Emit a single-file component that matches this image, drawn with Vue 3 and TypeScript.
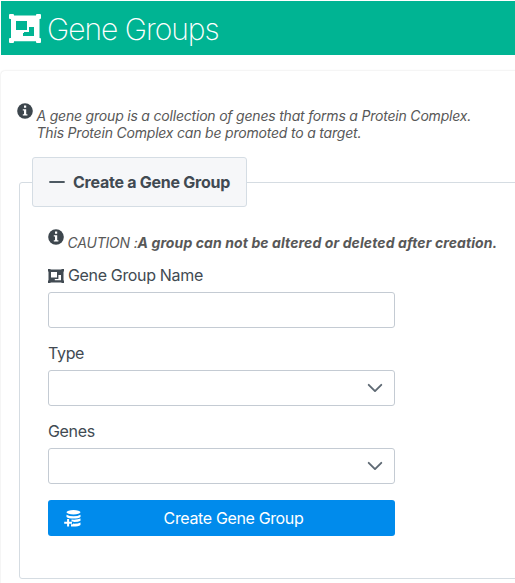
<script setup lang="ts">
import { ref } from 'vue'

interface SelectField {
  id: string
  label: string
}

const groupName = ref('')
const selects: SelectField[] = [
  { id: 'type', label: 'Type' },
  { id: 'genes', label: 'Genes' },
]
</script>

<template>
  <main class="page">
    <header class="banner">
      <svg class="banner-icon" viewBox="0 0 32 29" aria-hidden="true">
        <path fill="currentColor" fill-rule="evenodd" d="M1 0h3q1 0 1 1v.5h22V1q0-1 1-1h3q1 0 1 1v3q0 1-1 1h-.5v19h.5q1 0 1 1v3q0 1-1 1h-3q-1 0-1-1v-.7H5v.7q0 1-1 1H1q-1 0-1-1v-3q0-1 1-1h1V5H1Q0 5 0 4V1Q0 0 1 0zM7 7v9h11V7zM20 13v5h-5v1h-1v3h11v-9z" />
      </svg>
      <h1 class="title">Gene Groups</h1>
    </header>

    <section class="card">
      <div class="note intro">
        <svg class="info" viewBox="0 0 16 16" aria-hidden="true">
          <circle cx="8" cy="8" r="7.8" fill="#3d464d" />
          <path fill="#fff" d="M7 2.5h2.2v2.3H7zM5.8 6.2h3.4v5h1.2v1.4H5.8v-1.4H7V7.6H5.8z" />
        </svg>
        <p class="note-text">A gene group is a collection of genes that forms a Protein Complex.<br />This Protein Complex can be promoted to a target.</p>
      </div>

      <fieldset class="panel">
        <legend class="legend">
          <svg class="minus" viewBox="0 0 16 16" aria-hidden="true"><path d="M1 8h14" /></svg>
          <span class="legend-text">Create a Gene Group</span>
        </legend>

        <div class="note caution">
          <svg class="info" viewBox="0 0 16 16" aria-hidden="true">
            <circle cx="8" cy="8" r="7.8" fill="#3d464d" />
            <path fill="#fff" d="M7 2.5h2.2v2.3H7zM5.8 6.2h3.4v5h1.2v1.4H5.8v-1.4H7V7.6H5.8z" />
          </svg>
          <p class="note-text">CAUTION :<b class="strong">A group can not be altered or deleted after creation.</b></p>
        </div>

        <form class="form" @submit.prevent>
          <div class="field">
            <label class="label" for="name">
              <svg class="label-icon" viewBox="0 0 16 14" aria-hidden="true">
                <path fill="currentColor" fill-rule="evenodd" d="M0 0h2.500v.5h11V0H16v2.500h-.5v9h.5V14h-2.500v-.5h-11v.5H0v-2.500h.5v-9H0zM3 3v5.500h6V3zM10.400 6v3.900H6.800V11.200H13V6z" />
              </svg>
              <span class="name-text">Gene Group Name</span>
            </label>
            <input id="name" v-model="groupName" class="control" type="text" />
          </div>

          <div v-for="field in selects" :key="field.id" class="field">
            <span class="label">{{ field.label }}</span>
            <div class="control select" role="combobox" tabindex="0" :aria-label="field.label">
              <svg class="chevron" viewBox="0 0 16 16" aria-hidden="true"><path d="M1.700 4.800 8 11.100l6.300-6.300" /></svg>
            </div>
          </div>

          <button class="submit" type="submit">
            <svg class="db" viewBox="0 0 17 17" aria-hidden="true">
              <ellipse cx="9.500" cy="2.300" rx="7" ry="2.200" />
              <path d="M2.500 4.700q3 1.500 7 1.500t7-1.500v2.200q-2 1.700-7 1.700-5.100 0-7-1.700z" />
              <path d="M7.500 9.600q6 .4 9-1v2.100q-2 1.300-6.500 1.400l-1-.6H7.500z" />
              <path d="M9 13.600q5 .2 7.500-1.200v2.500q-2.500 1.900-9.500 1.500v-2.200h2z" />
              <path d="M3.100 8.900h2v2.800h2.900v2H5.100v2.800h-2v-2.800H.2v-2h2.900z" />
            </svg>
            <span class="submit-text">Create Gene Group</span>
          </button>
        </form>
      </fieldset>
    </section>
  </main>
</template>

<style>
body {
  background: #fff;
  overflow: hidden;
}
</style>

<style scoped>
.page {
  box-sizing: border-box;
  height: 583px;
  padding: 1px 0 0 1px;
  overflow: hidden;
  font-family: Inter, "Liberation Sans", sans-serif;
  font-size: 16px;
  color: #495057;
}
.banner {
  display: flex;
  align-items: center;
  box-sizing: border-box;
  height: 54px;
  padding-left: 8px;
  background: #00b493;
  color: #fff;
}
.banner-icon {
  flex: none;
  width: 32px;
  height: 29px;
}
.title {
  margin: 2px 0 0 6px;
  font-size: 30px;
  font-weight: 200;
  line-height: 36px;
  letter-spacing: -1.02px;
  white-space: nowrap;
}
.card {
  box-sizing: border-box;
  width: 540px;
  height: 530px;
  margin-top: 16px;
  padding: 32px 0 0 18px;
  border-radius: 4px;
  box-shadow: 0 0 2px rgba(0, 0, 0, 0.16);
}
.note {
  display: flex;
  align-items: flex-start;
}
.intro {
  height: 54px;
  margin-left: -2px;
}
.info {
  flex: none;
  width: 16px;
  height: 16px;
}
.note-text {
  margin: 4px 0 0 3.5px;
  font-size: 14px;
  font-style: italic;
  line-height: 17px;
  letter-spacing: -0.2px;
  color: #585858;
  white-space: nowrap;
}
.strong {
  font-weight: 700;
  letter-spacing: 0.1px;
}
.panel {
  box-sizing: border-box;
  width: 510px;
  height: 422px;
  min-width: 0;
  margin: 0;
  padding: 0 12px;
  border: 1px solid #d5dce2;
  border-radius: 3px;
}
.legend {
  display: flex;
  align-items: center;
  box-sizing: border-box;
  width: 215px;
  height: 50px;
  padding: 0 16px;
  border: 1px solid #d5dde4;
  border-radius: 3px;
  background: #f6f7f9;
  color: #414a52;
  font-weight: 700;
  white-space: nowrap;
}
.minus {
  flex: none;
  width: 16px;
  height: 16px;
  margin-right: 8px;
  fill: none;
  stroke: #4d5962;
  stroke-width: 1.8;
  stroke-linecap: round;
}
.legend-text {
  letter-spacing: -0.25px;
}
.caution {
  margin: 22px 0 0 16px;
}
.caution .note-text {
  margin-top: 5px;
}
.form {
  display: flex;
  flex-direction: column;
  width: 347px;
  margin: 15px 0 0 16px;
}
.field {
  display: flex;
  flex-direction: column;
  gap: 7px;
  margin-bottom: 16px;
}
.label {
  display: flex;
  align-items: center;
  height: 19px;
  line-height: 19px;
  letter-spacing: -0.34px;
  color: #414a52;
}
.label-icon {
  width: 16px;
  height: 14px;
  margin-right: 4px;
}
.control {
  box-sizing: border-box;
  width: 100%;
  height: 36px;
  margin: 0;
  padding: 0 12px;
  border: 1px solid #c4cbd3;
  border-radius: 3px;
  outline: none;
  background: #fff;
  font: inherit;
}
.select {
  display: flex;
  align-items: center;
  justify-content: flex-end;
  padding-right: 11px;
}
.chevron {
  width: 16px;
  height: 16px;
  fill: none;
  stroke: #5f6a74;
  stroke-width: 1.9;
  stroke-linecap: round;
  stroke-linejoin: round;
}
.submit {
  display: flex;
  align-items: center;
  height: 36px;
  margin: 0;
  padding: 0 16px;
  border: 0;
  border-radius: 3px;
  background: #008bec;
  color: #fff;
  font: inherit;
  letter-spacing: -0.36px;
}
.db {
  flex: none;
  width: 17px;
  height: 17px;
  fill: #fff;
}
.submit-text {
  flex: 1;
  padding-left: 7px;
  text-align: center;
}
</style>
